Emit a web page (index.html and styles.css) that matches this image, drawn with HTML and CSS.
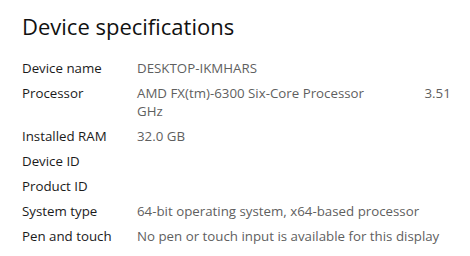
FILE: index.html
```html
<!DOCTYPE html>
<html lang="en">
<head>
  <meta charset="UTF-8" />
  <title>Device specifications</title>
  <link rel="stylesheet" href="styles.css">
</head>
<body>
  <div class="panel">
    <h2>Device specifications</h2>
    <div class="specs">
      <div class="row"><div class="label">Device name</div><div class="value">DESKTOP-IKMHARS</div></div>
      <div class="row"><div class="label">Processor</div><div class="value">AMD FX(tm)-6300 Six-Core Processor <span class="speed">3.51 GHz</span></div></div>
      <div class="row"><div class="label">Installed RAM</div><div class="value">32.0 GB</div></div>
      <div class="row"><div class="label">Device ID</div><div class="value"></div></div>
      <div class="row"><div class="label">Product ID</div><div class="value"></div></div>
      <div class="row"><div class="label">System type</div><div class="value">64-bit operating system, x64-based processor</div></div>
      <div class="row"><div class="label">Pen and touch</div><div class="value">No pen or touch input is available for this display</div></div>
    </div>
  </div>
</body>
</html>
```
FILE: styles.css
```css
body {
  margin: 0;
  background: #fff;
  font-family: "Open Sans", "Noto Sans", sans-serif;
}

.panel {
  padding: 12px 0 0 22px;
}

.panel h2 {
  margin: 0 0 19px;
  font-size: 22px;
  font-weight: 400;
  color: #111;
  line-height: 28px;
}

.specs {
  font-size: 13.3px;
  line-height: 18px;
}

.row {
  display: flex;
  margin-bottom: 7px;
}

.label {
  width: 115px;
  flex: none;
  color: #1b1b1b;
}

.value {
  width: 326px;
  min-height: 18px;
  color: #5f5f5f;
}

.speed {
  padding-left: 57px;
}
```
